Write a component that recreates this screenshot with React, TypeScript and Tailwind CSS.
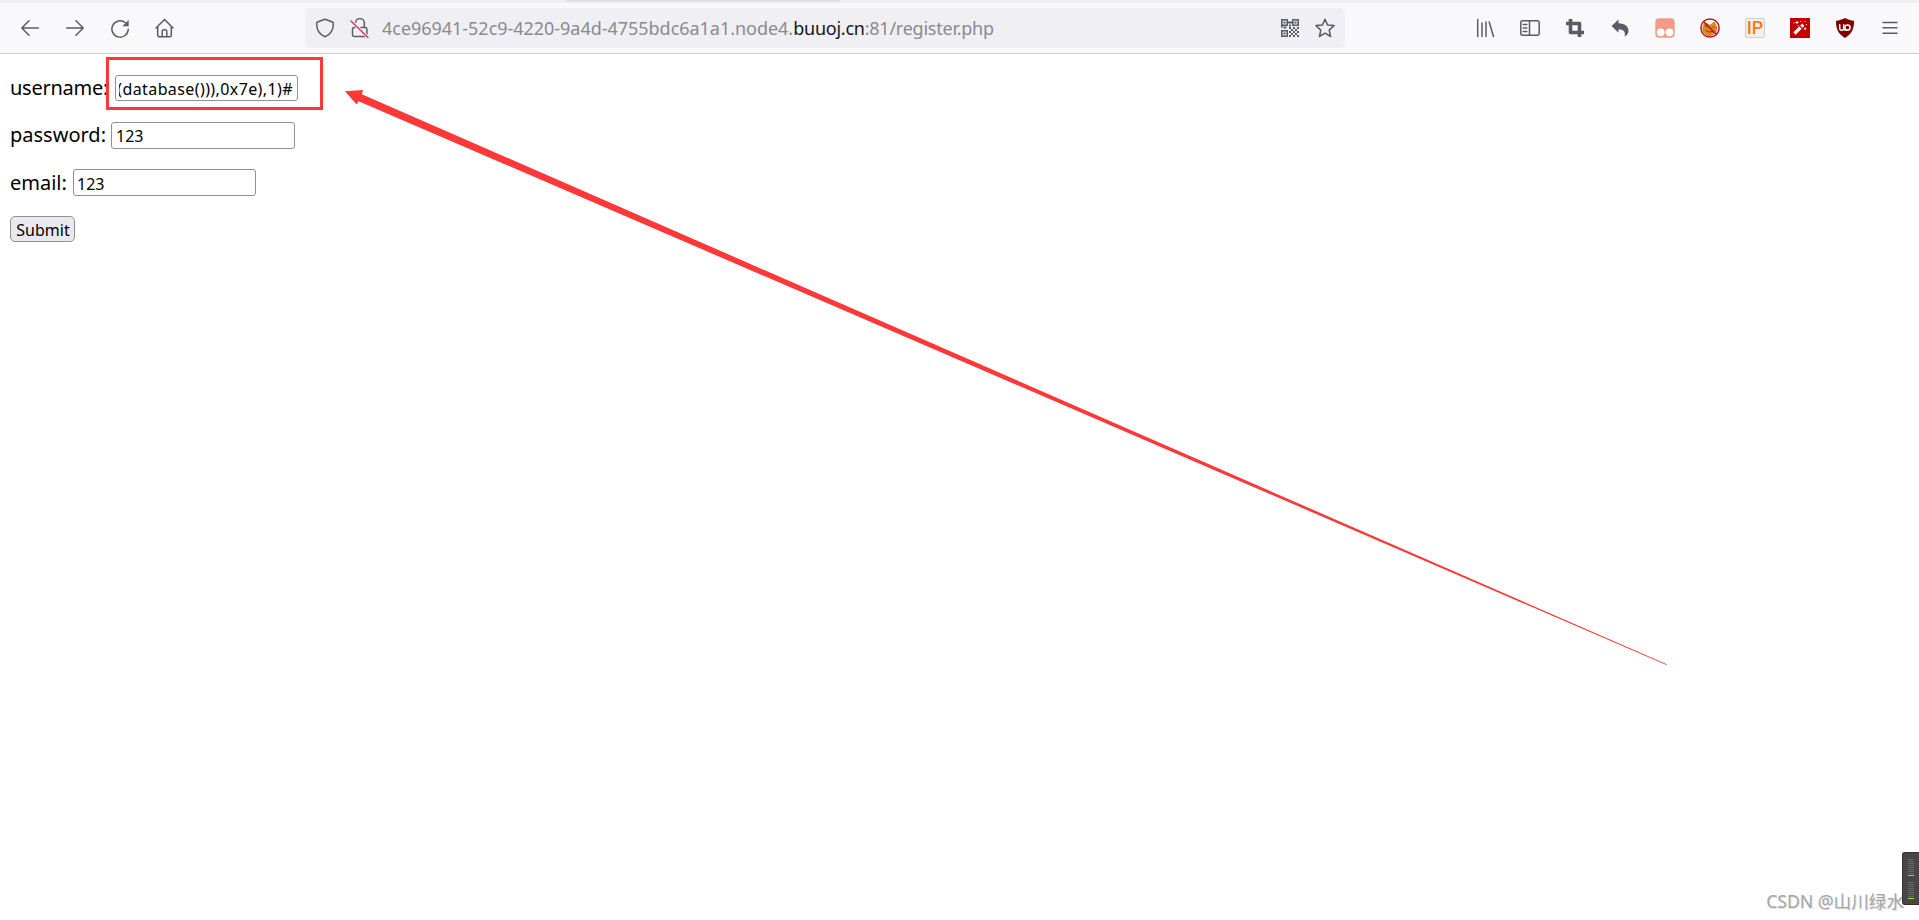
import type { ReactNode } from 'react'

const STRIPES = [0, 1, 2, 3, 4, 5, 6, 7]

const field = 'flex items-center rounded-[3px] border border-[#8f8f9d] bg-white text-[16px] leading-[22px] text-black overflow-hidden whitespace-nowrap'

export default function App() {
  return (
    <div className="relative flex h-[920px] w-[1919px] flex-col overflow-hidden bg-white font-['Noto_Sans','Noto_Sans_CJK_SC',sans-serif]">
      {/* bottom edge of the tab strip */}
      <div className="flex h-[3px] shrink-0 bg-[#f0f0f2] pl-[566px]">
        <div className="h-px w-[274px] bg-[#dddde0] shadow-[0_0_3px_#d4d4d8]" />
      </div>

      <Toolbar />

      <main className="flex flex-col items-start pl-[10px] pt-[21px]">
        <Row label="username:" width="w-[105px]" className="mb-[21px] h-[26px]" labelClass="-mt-px tracking-[-0.25px]">
          <div className={`${field} h-[26px] w-[183px] pl-[3px] pr-[4px] pt-[2px]`}>
            <div className="flex min-w-0 flex-1 justify-end overflow-hidden">
              <span className="tracking-[0.4px]">(database())),0x7e),1)#</span>
            </div>
          </div>
        </Row>
        <Row label="password:" width="w-[101px]" className="mb-[20px] h-[27px]" labelClass="-mt-px">
          <div className={`${field} h-[27px] w-[184px] pl-[4px] pt-px`}>123</div>
        </Row>
        <Row label="email:" width="w-[63px]" className="mb-[20px] h-[27px]" labelClass="mt-px">
          <div className={`${field} h-[27px] w-[183px] pl-[3px] pt-[2px]`}>123</div>
        </Row>
        <button className="h-[26px] w-[65px] rounded-[5px] border border-[#8f8f9d] bg-[#e9e9ed] pl-px pt-[2px] text-[16px] leading-[22px] text-black">
          Submit
        </button>
      </main>

      {/* annotations over the page */}
      <div className="absolute left-[106px] top-[57px] h-[53px] w-[217px] border-[3px] border-[#fd3838]" />
      <svg className="absolute left-0 top-0" width="1919" height="920" fill="#fd3838">
        <path d="M345 91.3 363 90.1 361.8 94.2 1666.800 664.300 1666.500 665 358.6 101.2 356.6 104.6Z" />
      </svg>

      <div className="absolute bottom-[6px] right-[15px] whitespace-nowrap text-[17.6px] leading-[26px] text-[#a6a6a6] [text-shadow:1px_1px_0_#e2e2e2]">
        CSDN @山川绿水
      </div>
      <LevelMeter />
    </div>
  )
}

type RowProps = { label: string; width: string; className: string; labelClass: string; children: ReactNode }

function Row({ label, width, className, labelClass, children }: RowProps) {
  return (
    <div className={`flex items-center ${className}`}>
      <label className={`${width} ${labelClass} shrink-0 whitespace-nowrap text-[20px] leading-[26px] text-black`}>{label}</label>
      {children}
    </div>
  )
}

function Toolbar() {
  return (
    <header className="flex h-[51px] shrink-0 items-center border-b border-[#cccccf] bg-[#f9f9fb] text-[#5b5b66]">
      <div className="flex w-[305px] gap-[25px] pl-[20px]">
        <Icon><path d="M18.3 10H1.8M9 2.8 1.8 10 9 17.2" /></Icon>
        <Icon><path d="M1.7 10h16.5M11 2.8l7.2 7.2L11 17.2" /></Icon>
        <Icon>
          <path d="M18.300 11.200A8.200 8.200 0 1 1 15.200 4.500" />
          <path d="M18.7 2v6.300h-6.300z" fill="currentColor" stroke="none" />
        </Icon>
        <Icon>
          <path d="M1 10 9.5 1.500 18 10M2.700 8.500v8.700q0 1.500 1.500 1.500h10.600q1.500 0 1.500-1.500V8.500M7.200 18.500v-5q0-1.800 1.800-1.800h1q1.800 0 1.800 1.800v5" />
        </Icon>
      </div>

      <div className="flex h-[40px] w-[1040px] items-center rounded-[5px] bg-[#f0f0f4] pl-[10px] pr-[10px]">
        <Icon>
          <path d="M10 1.200 17.500 4q.9.300.9 1.400c0 6.600-3.300 11.200-8.400 13.300C4.900 16.600 1.600 12 1.600 5.400q0-1.100.9-1.400z" />
        </Icon>
        <div className="w-[15px]" />
        <Icon>
          <path d="M5.500 6.500V5a4.400 4.400 0 0 1 8.800 0v4.500M5 9.500h-.8q-1.700 0-1.700 1.700v5.600q0 1.700 1.700 1.700h11q1.700 0 1.700-1.700v-5.600q0-1.700-1.700-1.700H9.500" />
          <path d="M1.500 3 18 19.300" stroke="#f0f0f4" strokeWidth="3.200" />
          <path d="M1 3 18 19.500" stroke="#e8345a" strokeWidth="1.500" />
        </Icon>
        <div className="ml-[12px] flex-1 whitespace-nowrap text-[18px] leading-[26px] tracking-[-0.03px] text-[#8a8a8e]">
          4ce96941-52c9-4220-9a4d-4755bdc6a1a1.node4.<span className="tracking-[-0.24px] text-[#15141a]">buuoj.cn</span><span className="tracking-[-0.24px]">:81/register.php</span>
        </div>
        <QrIcon />
        <div className="w-[15px]" />
        <Icon>
          <path d="M10 1.200 12.500 6.900 19 7.600 14.200 12.100 15.600 18.500 10 15.200 4.400 18.500 5.800 12.100 1 7.600 7.500 6.900z" />
        </Icon>
      </div>

      <div className="ml-auto flex gap-[25px] pr-[19px]">
        <Icon><path d="M2.700 1.500v17M7 5v13.500M11 4v14.500M14.200 4l4.300 14.500" /></Icon>
        <Icon>
          <rect x=".8" y="2.800" width="18.400" height="14.400" rx="2" />
          <path d="M9.500 3v14M3.200 6.500h3.600M3.200 10h3.600M3.200 13.500h3.600" />
        </Icon>
        <Icon>
          <path d="M5.500 1v13.500H19M1 5.500h13.500V19" strokeWidth="3.600" strokeLinecap="butt" />
        </Icon>
        <Icon>
          <path d="M1.500 8 8.500 1.500v3.700c6.500.3 10 3 10 7.600 0 2.700-1.500 4.900-4 5.700 1.500-4.300-.8-7-6-7.200v3.500z" fill="currentColor" stroke="none" />
        </Icon>
        <Icon>
          <rect x=".3" y=".3" width="19.400" height="19.400" rx="4" fill="#f39b8b" stroke="none" />
          <g fill="#fff" stroke="none"><circle cx="5.700" cy="14.300" r="3.900" /><circle cx="14.500" cy="14.300" r="3.900" /></g>
        </Icon>
        <NoFoxIcon />
        <div className="flex h-[20px] w-[20px] items-center justify-center rounded-[2px] border border-[#cfcfcf] bg-[#f0f0ee] font-[Roboto,sans-serif] text-[18px] font-medium leading-[18px] text-[#f57c0f]">
          IP
        </div>
        <WandIcon />
        <Icon>
          <path d="M10 0c3 1.600 5.500 2.400 9 2.700 0 8.300-1.800 12.800-9 17.300C2.800 15.500 1 11 1 2.700 4.500 2.400 7 1.600 10 0z" fill="#800000" stroke="none" />
          <path d="M4.700 6.800v3.400q0 2 2 2t2-2V6.800M8.700 10.200q.2 2 2.200 2" stroke="#fff" strokeWidth="1.500" />
          <circle cx="12.500" cy="9.500" r="2.600" stroke="#fff" strokeWidth="1.500" />
        </Icon>
        <Icon><path d="M3 4.500h14M3 9.800h14M3 15.200h14" /></Icon>
      </div>
    </header>
  )
}

function Icon({ children }: { children: ReactNode }) {
  return (
    <svg className="shrink-0" width="20" height="20" viewBox="0 0 20 20" fill="none" stroke="currentColor" strokeWidth="1.500" strokeLinecap="round" strokeLinejoin="round">
      {children}
    </svg>
  )
}

function QrIcon() {
  return (
    <Icon>
      <g strokeWidth="1.600" strokeLinejoin="miter" strokeLinecap="butt">
        <path d="M1.800 1.800h5.400v5.400H1.800zM12.800 1.800h5.400v5.400h-5.400zM1.800 12.800h5.400v5.400H1.800z" />
        <path d="M3.500 4.500h2M14.500 4.500h2M3.500 15.500h2M8 4.500h4M9 7.500h2M3.500 9.500h3M1 8.500h2M9 10h2M13 10h2M17 10h2M11 12h2M15 12h2M9 14h2M13 14h2M17 14h2M11 16h2M15 16h2M9 18h2M13 18h2M17 18h2" strokeWidth="2" />
      </g>
    </Icon>
  )
}

function NoFoxIcon() {
  return (
    <Icon>
      <path d="M4 6.500 7 5.500l3 2L14.500 4l1 3.500 1.500 1-1 5-3.500 3.500-5 .5-4-3.500L2.800 10z" fill="#e58a17" stroke="#bc6b12" strokeWidth=".8" />
      <path d="M9 9.500h1M13 9h1M6 12.500l3 1.500 4-.5M5 8l2 1" stroke="#6f450d" strokeWidth="1" />
      <circle cx="10" cy="10" r="9.100" stroke="#c5161d" strokeWidth="1.500" />
      <path d="M3.600 3.600 16.400 16.400" stroke="#c5161d" strokeWidth="1.500" />
    </Icon>
  )
}

function WandIcon() {
  return (
    <Icon>
      <path d="M0 0h20v20H0z" fill="#c40000" stroke="none" />
      <path d="M4.500 15.500 10.500 9.500" stroke="#fff" strokeWidth="3.200" strokeLinecap="butt" />
      <path d="M11.300 8.700 13.300 6.700" stroke="#fff" strokeWidth="3.200" strokeLinecap="butt" />
      <path d="M4 5h.1M7 3.500v2M6 4.500h2M10.500 3.500h.1M15 3.500h.1M16.500 6.500h.1M15 10v1.500M14.300 10.700h1.500M8 7.500h.1" stroke="#fff" strokeWidth="1" />
    </Icon>
  )
}

function LevelMeter() {
  return (
    <div className="absolute right-0 top-[852px] flex h-[53px] w-[17px] flex-col gap-[6px] rounded-l-[3px] border border-r-0 border-[#333] bg-[#474747] pl-[5px] pt-[6px]">
      <Bars peak="bg-[#ffa92c]" />
      <Bars peak="bg-[#8aec18]" />
    </div>
  )
}

function Bars({ peak }: { peak: string }) {
  return (
    <div className="flex w-[6px] flex-col gap-px">
      {STRIPES.map(i => <div key={i} className="h-px bg-[#686868]" />)}
      <div className={`h-px ${peak}`} />
    </div>
  )
}
